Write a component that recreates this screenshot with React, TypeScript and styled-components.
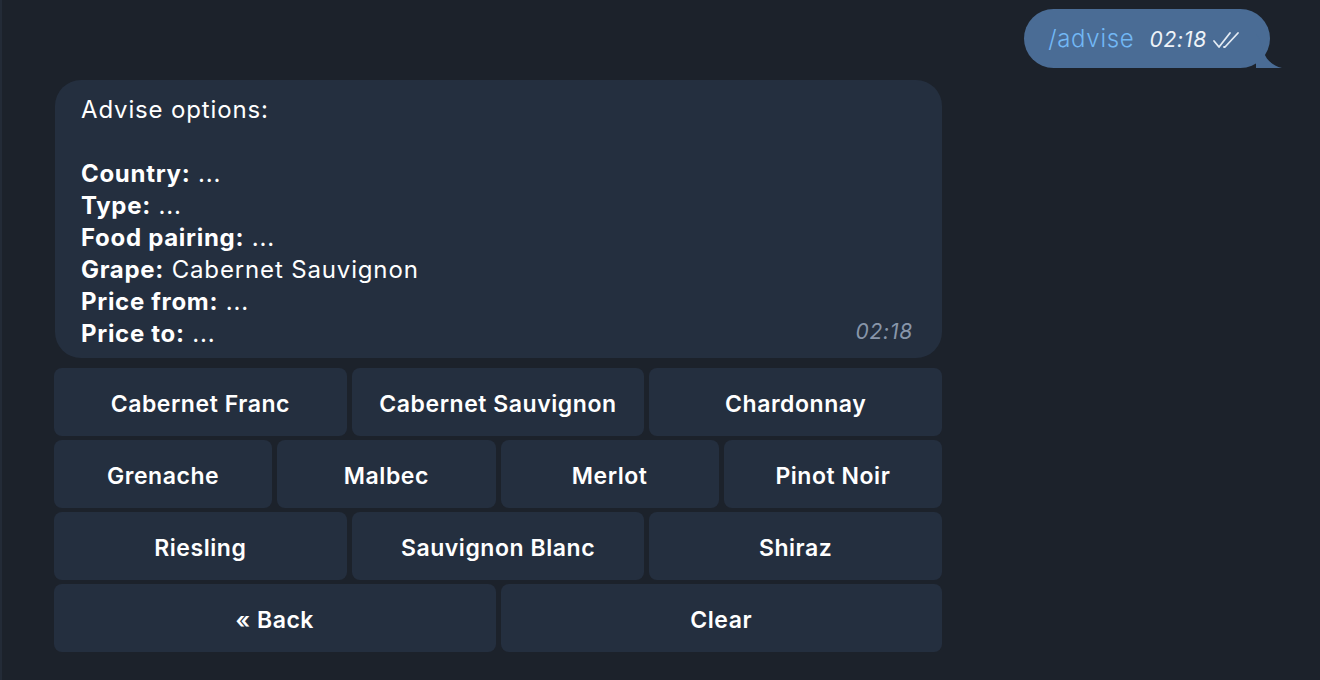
import styled, {createGlobalStyle} from 'styled-components';

const GlobalStyle = createGlobalStyle`
  html, body {
    margin: 0;
    padding: 0;
    background: #1c222b;
  }

  body {
    font-family: Inter, "Noto Sans", "Liberation Sans", sans-serif;
    -webkit-font-smoothing: antialiased;
  }
`;

const grapeRows: string[][] = [
  ['Cabernet Franc', 'Cabernet Sauvignon', 'Chardonnay'],
  ['Grenache', 'Malbec', 'Merlot', 'Pinot Noir'],
  ['Riesling', 'Sauvignon Blanc', 'Shiraz'],
  ['« Back', 'Clear'],
];

const options = [
  {label: 'Country:', value: '...'},
  {label: 'Type:', value: '...'},
  {label: 'Food pairing:', value: '...'},
  {label: 'Grape:', value: 'Cabernet Sauvignon'},
  {label: 'Price from:', value: '...'},
  {label: 'Price to:', value: '...'},
];

export default function App() {
  return (
    <>
      <GlobalStyle/>
      <Chat>

        {/* Исходящее сообщение */}
        <OutRow>
          <OutBubble>
            <Command>/advise</Command>
            <OutTime>02:18</OutTime>
            <DoubleCheck/>
            <Tail width="26" height="34" viewBox="0 0 26 34">
              <path d="M0 0 C4 4 6 12 8 18 C10 26 16 31 26 34 L0 34 Z" fill="#4a6c95"/>
            </Tail>
          </OutBubble>
        </OutRow>

        {/* Входящее сообщение с клавиатурой */}
        <InBlock>
          <InBubble>
            <Line>Advise options:</Line>
            <Line>&nbsp;</Line>
            {options.map(o => (
              <Line key={o.label}>
                <b>{o.label}</b> {o.value}
              </Line>
            ))}
            <InTime>02:18</InTime>
          </InBubble>

          <Keyboard>
            {grapeRows.map((row, i) => (
              <KeyRow key={i} $cols={row.length}>
                {row.map(k => <Key key={k}>{k}</Key>)}
              </KeyRow>
            ))}
          </Keyboard>
        </InBlock>

      </Chat>
    </>
  );
}

function DoubleCheck() {
  return (
    <CheckIcon width="30" height="20" viewBox="0 0 30 20" fill="none"
               stroke="#e4ebf3" strokeWidth="1.8" strokeLinecap="round" strokeLinejoin="round">
      <path d="M2 11 L7 17 L18 3"/>
      <path d="M12 17 L13 17 L26 3"/>
    </CheckIcon>
  );
}


const Chat = styled.div`
  width: 1320px;
  height: 680px;
  box-sizing: border-box;
  border-left: 2px solid #232b37;
  padding: 9px 0 0 52px;
  display: flex;
  flex-direction: column;
  gap: 12px;
  overflow: hidden;
`;

const OutRow = styled.div`
  display: flex;
  justify-content: flex-end;
  padding-right: 50px;
`;

const OutBubble = styled.div`
  position: relative;
  height: 59px;
  box-sizing: border-box;
  padding: 0 28px 0 24px;
  border-radius: 30px;
  background: #4a6c95;
  display: flex;
  align-items: center;
`;

const Command = styled.span`
  font-size: 24px;
  font-weight: 300;
  letter-spacing: 0.7px;
  color: #72b8f5;
  margin-right: 15px;
`;

const OutTime = styled.span`
  font-size: 21px;
  font-style: italic;
  letter-spacing: 0.8px;
  color: #eef3f8;
  margin-right: 5px;
  padding-top: 2px;
`;

const CheckIcon = styled.svg`
  display: block;
  margin-top: 2px;
`;

const Tail = styled.svg`
  position: absolute;
  right: -12px;
  bottom: 0;
`;

const InBlock = styled.div`
  width: 888px;
  display: flex;
  flex-direction: column;
  gap: 10px;
`;

const InBubble = styled.div`
  position: relative;
  margin-left: 1px;
  box-sizing: border-box;
  height: 278px;
  padding: 14px 26px 8px;
  border-radius: 26px;
  background: #242f3f;
  color: #ffffff;
  font-size: 24px;
  letter-spacing: 0.85px;

  b {
    font-weight: 700;
    letter-spacing: 0.7px;
  }
`;

const Line = styled.div`
  line-height: 32px;
  height: 32px;
  white-space: nowrap;
`;

const InTime = styled.span`
  position: absolute;
  right: 29px;
  bottom: 14px;
  font-size: 21px;
  font-style: italic;
  letter-spacing: 0.8px;
  color: #8896aa;
`;

const Keyboard = styled.div`
  display: flex;
  flex-direction: column;
  gap: 4px;
`;

const KeyRow = styled.div<{ $cols: number }>`
  display: grid;
  grid-template-columns: repeat(${p => p.$cols}, 1fr);
  gap: 5px;
`;

const Key = styled.div`
  height: 68px;
  box-sizing: border-box;
  padding-top: 3px;
  border-radius: 8px;
  background: #242f3f;
  color: #ffffff;
  font-size: 23px;
  font-weight: 600;
  letter-spacing: 0.55px;
  display: flex;
  align-items: center;
  justify-content: center;
`;
